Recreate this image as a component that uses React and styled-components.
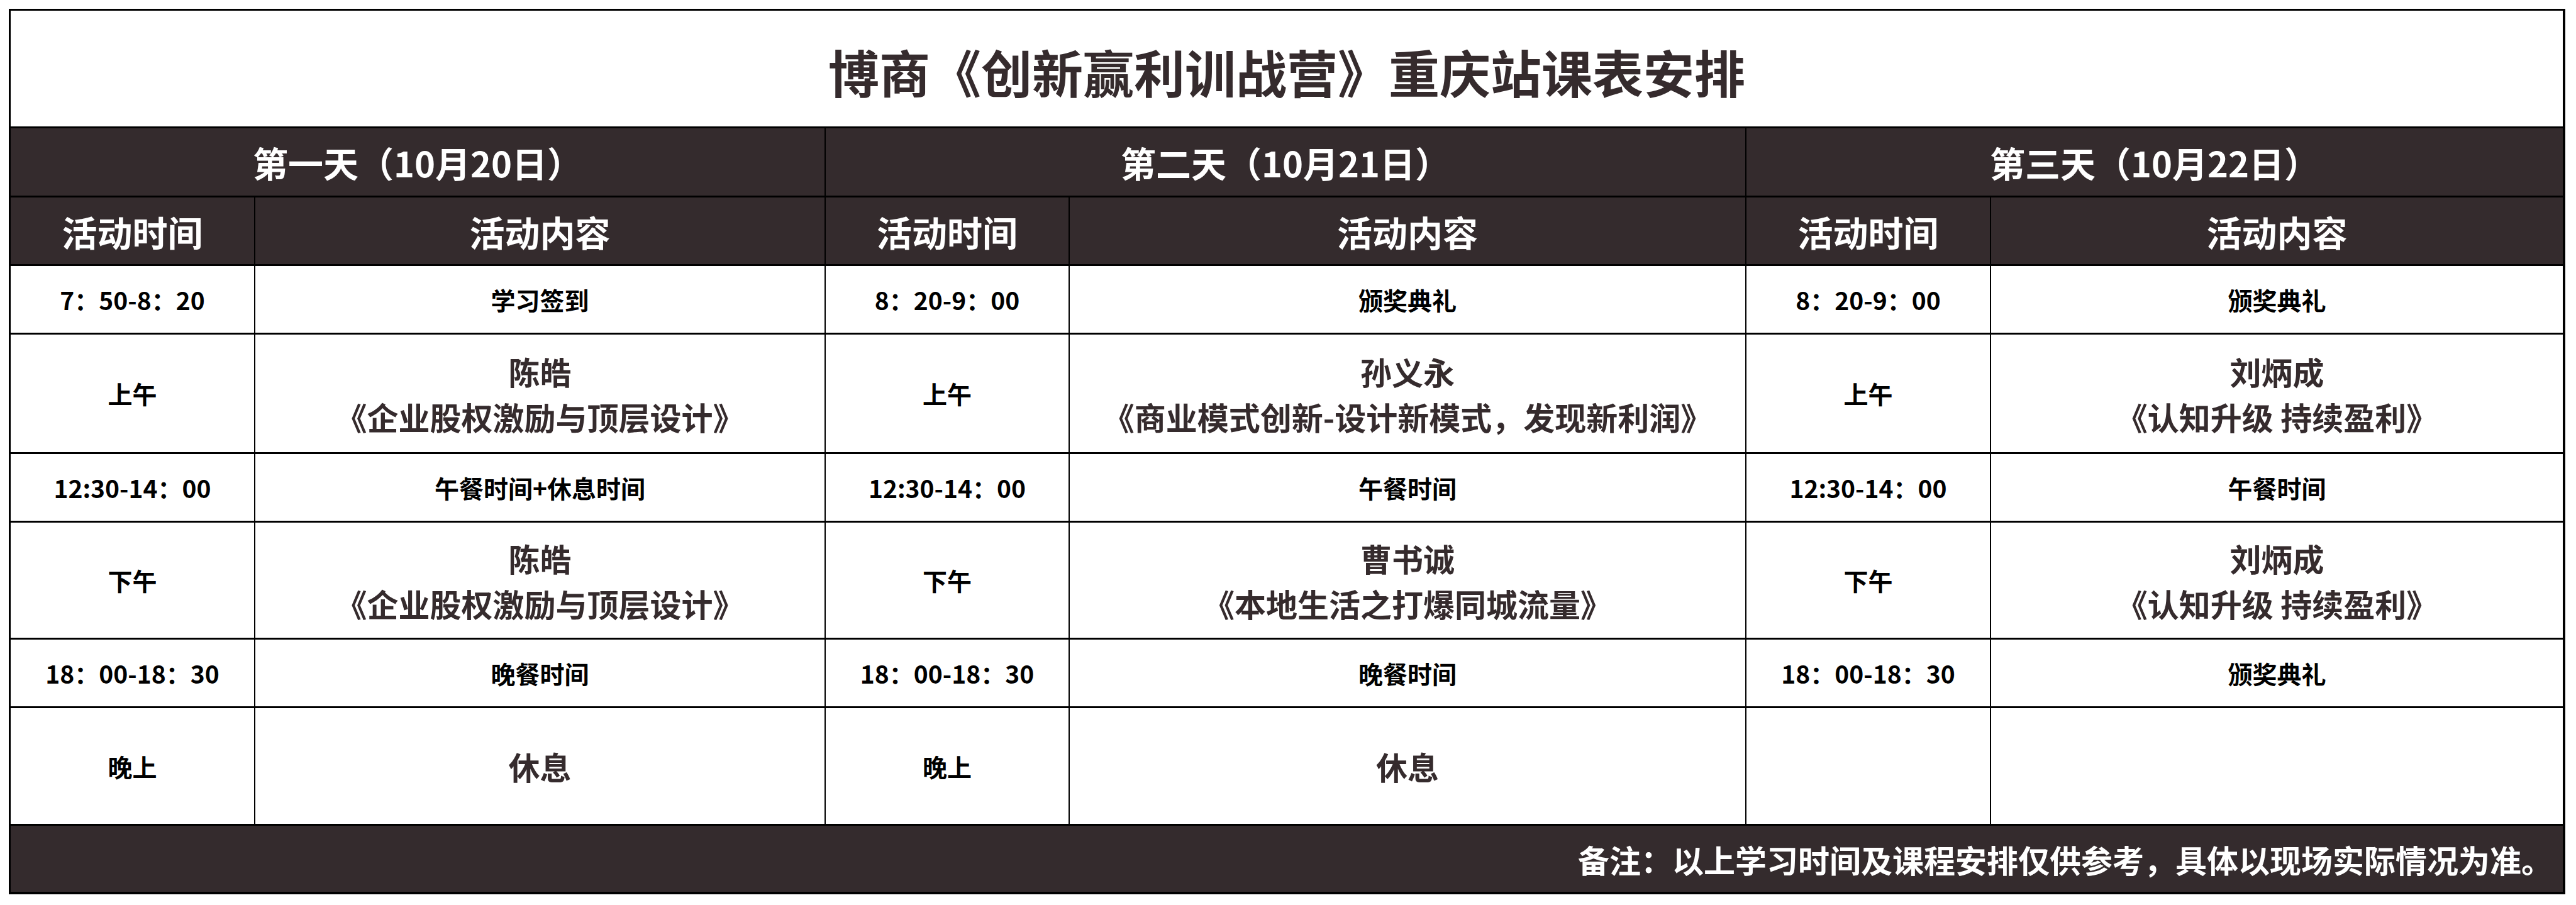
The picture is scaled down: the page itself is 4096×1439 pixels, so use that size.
import React from "react";
import styled, { createGlobalStyle } from "styled-components";

const GlobalStyle = createGlobalStyle`
  html, body {
    margin: 0;
    padding: 0;
    background: #fff;
  }
  body {
    font-family: "Noto Sans CJK SC", "Noto Sans", sans-serif;
  }
`;

const Page = styled.div`
  padding: 14px 0 0 14px;
`;

const Schedule = styled.div`
  display: grid;
  grid-template-columns: 387px 905px 386px 1074px 387px 909px;
  grid-template-rows: 184px 107px 106px 106px 187px 106px 183px 106px 184px 105px;
  gap: 3px 2px;
  padding: 3px 4px 4px 3px;
  width: max-content;
  background: #000;
`;

const Title = styled.div`
  grid-column: 1 / -1;
  display: flex;
  align-items: center;
  justify-content: center;
  padding-top: 6px;
  background: #fff;
  color: #352b2d;
  font-size: 81px;
  font-weight: 700;
`;

const Band = styled.div`
  grid-column: span ${(p) => p.$span || 1};
  display: flex;
  align-items: center;
  justify-content: center;
  background: #342b2d;
  color: #fff;
  font-size: 56px;
  font-weight: 700;
`;

const Cell = styled.div`
  display: flex;
  flex-direction: column;
  align-items: center;
  justify-content: center;
  background: #fff;
  color: ${(p) => (p.$big ? "#352b2d" : "#000")};
  font-size: ${(p) => (p.$big ? "50px" : "39px")};
  font-weight: 700;
  line-height: ${(p) => (p.$big ? "72px" : "1.2")};
  white-space: nowrap;
`;

const Footer = styled.div`
  grid-column: 1 / -1;
  display: flex;
  align-items: center;
  justify-content: flex-end;
  padding-right: 16px;
  background: #342b2d;
  color: #fff;
  font-size: 50px;
  font-weight: 700;
`;

const days = [
  {
    title: "第一天（10月20日）",
    rows: [
      ["7：50-8：20", "学习签到"],
      ["上午", ["陈皓", "《企业股权激励与顶层设计》"]],
      ["12:30-14：00", "午餐时间+休息时间"],
      ["下午", ["陈皓", "《企业股权激励与顶层设计》"]],
      ["18：00-18：30", "晚餐时间"],
      ["晚上", ["休息"]],
    ],
  },
  {
    title: "第二天（10月21日）",
    rows: [
      ["8：20-9：00", "颁奖典礼"],
      ["上午", ["孙义永", "《商业模式创新-设计新模式，发现新利润》"]],
      ["12:30-14：00", "午餐时间"],
      ["下午", ["曹书诚", "《本地生活之打爆同城流量》"]],
      ["18：00-18：30", "晚餐时间"],
      ["晚上", ["休息"]],
    ],
  },
  {
    title: "第三天（10月22日）",
    rows: [
      ["8：20-9：00", "颁奖典礼"],
      ["上午", ["刘炳成", "《认知升级 持续盈利》"]],
      ["12:30-14：00", "午餐时间"],
      ["下午", ["刘炳成", "《认知升级 持续盈利》"]],
      ["18：00-18：30", "颁奖典礼"],
      ["", ""],
    ],
  },
];

const Content = ({ value }) =>
  Array.isArray(value) ? (
    <Cell $big>
      {value.map((line) => (
        <div key={line}>{line}</div>
      ))}
    </Cell>
  ) : (
    <Cell>{value}</Cell>
  );

export default function App() {
  return (
    <>
      <GlobalStyle />
      <Page>
        <Schedule>
          <Title>博商《创新赢利训战营》重庆站课表安排</Title>
          {days.map((d) => (
            <Band key={d.title} $span={2}>
              {d.title}
            </Band>
          ))}
          {days.map((d) => (
            <React.Fragment key={d.title + "h"}>
              <Band>活动时间</Band>
              <Band>活动内容</Band>
            </React.Fragment>
          ))}
          {days[0].rows.map((_, r) =>
            days.map((d, i) => (
              <React.Fragment key={r + "-" + i}>
                <Cell>{d.rows[r][0]}</Cell>
                <Content value={d.rows[r][1]} />
              </React.Fragment>
            ))
          )}
          <Footer>备注：以上学习时间及课程安排仅供参考，具体以现场实际情况为准。</Footer>
        </Schedule>
      </Page>
    </>
  );
}
